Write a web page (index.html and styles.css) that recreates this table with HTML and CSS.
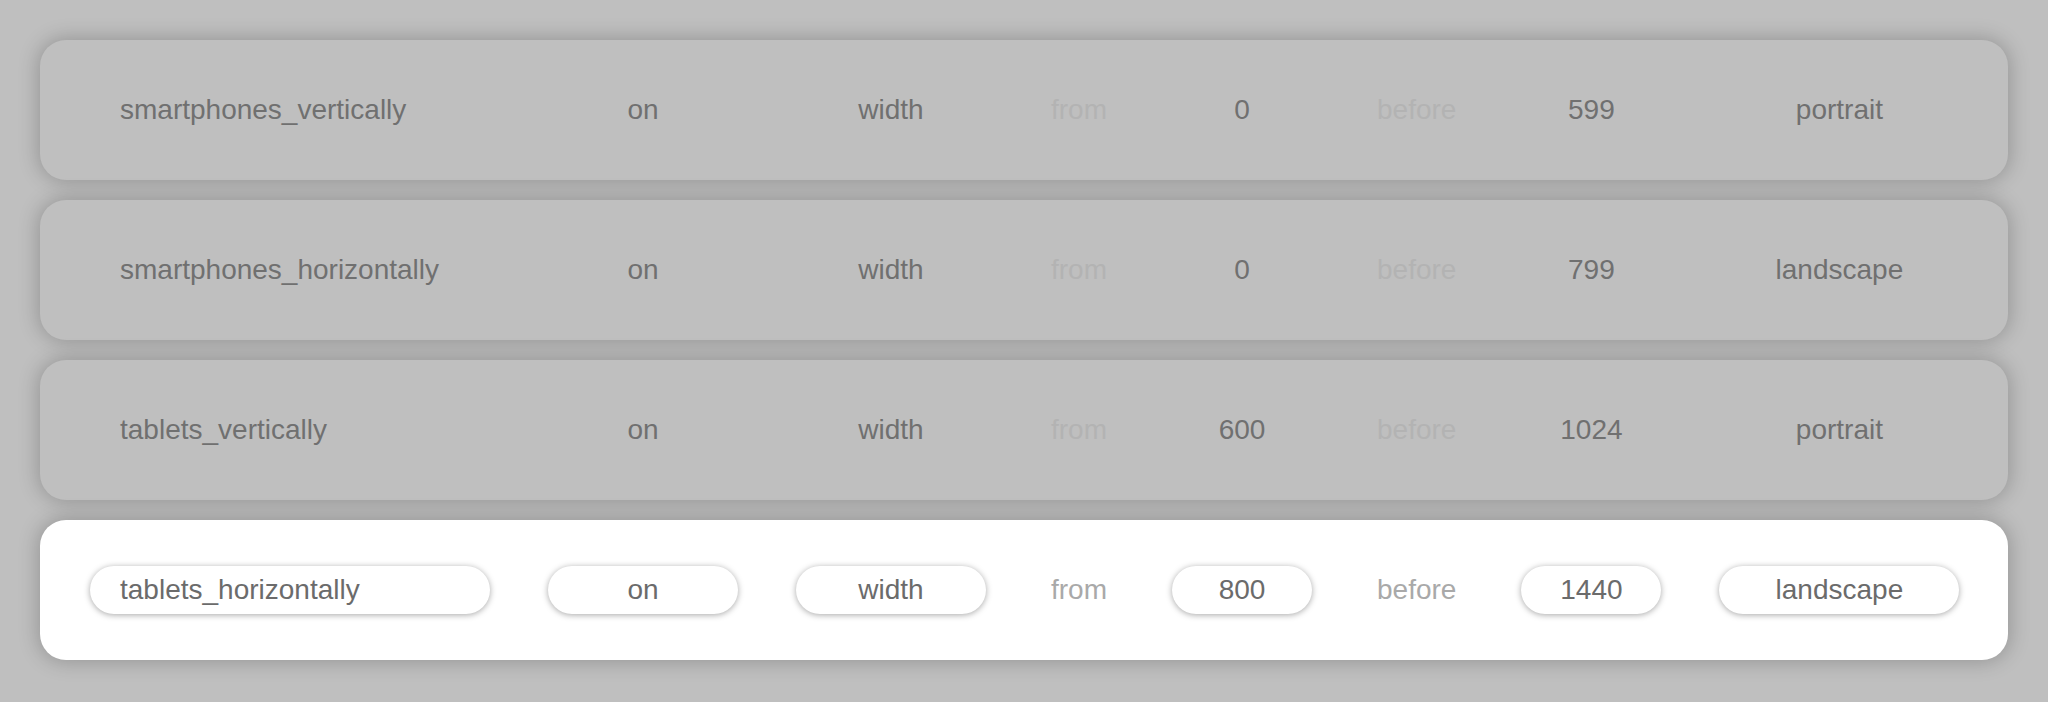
FILE: index.html
```html
<!DOCTYPE html>
<html lang="en">
<head>
<meta charset="utf-8">
<title>Breakpoints</title>
<link rel="stylesheet" href="styles.css">
</head>
<body>
<div class="list">
  <div class="rule dim">
    <span class="field name">smartphones_vertically</span>
    <span class="field w190">on</span>
    <span class="field w190">width</span>
    <span class="label">from</span>
    <span class="field w140">0</span>
    <span class="label">before</span>
    <span class="field w140">599</span>
    <span class="field w240">portrait</span>
  </div>
  <div class="rule dim">
    <span class="field name">smartphones_horizontally</span>
    <span class="field w190">on</span>
    <span class="field w190">width</span>
    <span class="label">from</span>
    <span class="field w140">0</span>
    <span class="label">before</span>
    <span class="field w140">799</span>
    <span class="field w240">landscape</span>
  </div>
  <div class="rule dim">
    <span class="field name">tablets_vertically</span>
    <span class="field w190">on</span>
    <span class="field w190">width</span>
    <span class="label">from</span>
    <span class="field w140">600</span>
    <span class="label">before</span>
    <span class="field w140">1024</span>
    <span class="field w240">portrait</span>
  </div>
  <div class="rule active">
    <span class="field name">tablets_horizontally</span>
    <span class="field w190">on</span>
    <span class="field w190">width</span>
    <span class="label">from</span>
    <span class="field w140">800</span>
    <span class="label">before</span>
    <span class="field w140">1440</span>
    <span class="field w240">landscape</span>
  </div>
</div>
</body>
</html>
```

FILE: styles.css
```css
html, body {
  margin: 0;
  padding: 0;
  background: #bfbfbf;
}
body {
  font-family: "Liberation Sans", Arial, Helvetica, sans-serif;
  font-size: 28px;
}
.list {
  display: flex;
  flex-direction: column;
  gap: 20px;
  padding: 40px;
}
.rule {
  height: 140px;
  border-radius: 26px;
  display: flex;
  align-items: center;
  gap: 58px;
  padding: 0 50px;
  box-sizing: border-box;
  box-shadow: 0 0 20px 2px rgba(0, 0, 0, 0.22);
}
.rule.dim {
  background: #bfbfbf;
  color: #707070;
}
.rule.dim .label {
  color: #b3b3b3;
}
.rule.active {
  background: #ffffff;
  color: #6b6b6b;
}
.rule.active .label {
  color: #a9a9a9;
}
.field {
  height: 48px;
  line-height: 48px;
  border-radius: 24px;
  text-align: center;
  box-sizing: border-box;
  white-space: nowrap;
  flex: none;
}
.rule.active .field {
  background: #ffffff;
  box-shadow: 0 1px 6px rgba(0, 0, 0, 0.35);
}
.field.name {
  width: 400px;
  text-align: left;
  padding-left: 30px;
}
.w190 { width: 190px; }
.w140 { width: 140px; }
.w240 { width: 240px; }
.label {
  padding: 0 7px;
  line-height: 48px;
  flex: none;
}
```
